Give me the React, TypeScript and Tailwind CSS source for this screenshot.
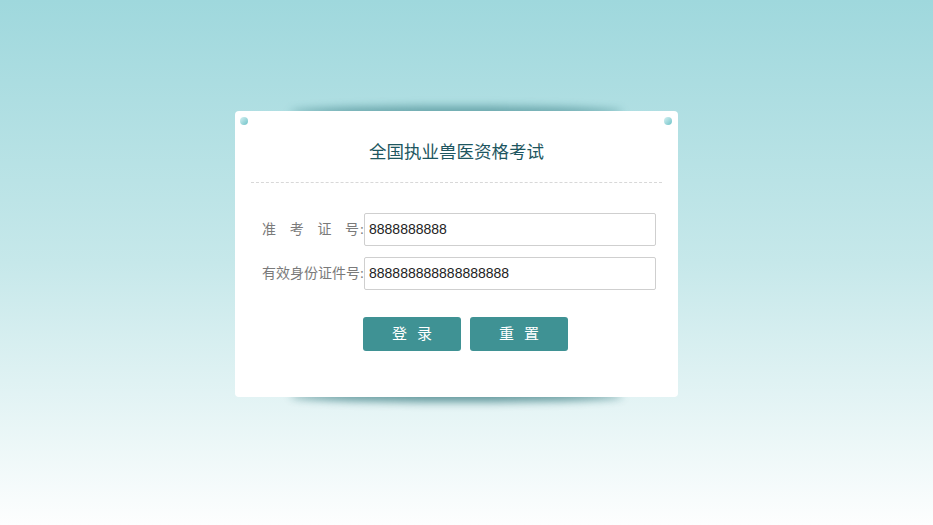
export default function App() {
  return (
    <div className="h-[525px] w-full overflow-hidden bg-gradient-to-b from-[#9fd8dd] via-[#c6e8ea] to-[#fdfefe] font-['Liberation_Sans','Noto_Sans_CJK_SC',sans-serif]">
      <div className="relative ml-[235px] mt-[111px] h-[286px] w-[443px]">
        {/* curved shadows above and below the card */}
        <div className="absolute left-[55px] right-[55px] -top-[5px] h-[12px] rounded-[50%] bg-[#4b8d93] opacity-70 blur-[4px]" />
        <div className="absolute left-[55px] right-[55px] -bottom-[5px] h-[12px] rounded-[50%] bg-[#3f7f84] opacity-80 blur-[4px]" />

        <div className="relative z-10 h-full w-full rounded-[4px] bg-white">
          <span className="absolute left-[5px] top-[6px] h-[8px] w-[8px] rounded-full bg-gradient-to-br from-[#d6f2f3] to-[#6cc2c8]" />
          <span className="absolute right-[6px] top-[6px] h-[8px] w-[8px] rounded-full bg-gradient-to-br from-[#d6f2f3] to-[#6cc2c8]" />

          <h1 className="pt-[29px] text-center text-[17.5px] leading-[24px] text-[#1d5660]">
            全国执业兽医资格考试
          </h1>
          <div className="mx-[16px] mt-[18px] border-t border-dashed border-[#d8d8d8]" />

          <div className="ml-[27px] mt-[30px] flex flex-col gap-[11px]">
            <div className="flex items-center">
              <div className="flex w-[102px] items-center font-['Liberation_Serif','Noto_Sans_CJK_SC',serif] text-[14px] text-[#7a7a7a]">
                <div className="flex flex-1 justify-between pr-[1px]">
                  <span>准</span>
                  <span>考</span>
                  <span>证</span>
                  <span>号</span>
                </div>
                <span>:</span>
              </div>
              <div className="flex h-[33px] w-[292px] items-center rounded-[2px] border border-[#cfcfcf] pl-[4px] text-[14px] text-[#222]">
                8888888888
              </div>
            </div>
            <div className="flex items-center">
              <div className="w-[102px] whitespace-nowrap font-['Liberation_Serif','Noto_Sans_CJK_SC',serif] text-[14px] text-[#7a7a7a]">
                有效身份证件号:
              </div>
              <div className="flex h-[33px] w-[292px] items-center rounded-[2px] border border-[#cfcfcf] pl-[4px] text-[14px] text-[#222]">
                888888888888888888
              </div>
            </div>
          </div>

          <div className="ml-[128px] mt-[27px] flex gap-[9px]">
            <button className="flex h-[34px] w-[98px] items-center justify-center gap-[10px] rounded-[3px] bg-[#3f9294] text-[15px] text-white">
              <span>登</span>
              <span>录</span>
            </button>
            <button className="flex h-[34px] w-[98px] items-center justify-center gap-[10px] rounded-[3px] bg-[#3f9294] text-[15px] text-white">
              <span>重</span>
              <span>置</span>
            </button>
          </div>
        </div>
      </div>
    </div>
  );
}
